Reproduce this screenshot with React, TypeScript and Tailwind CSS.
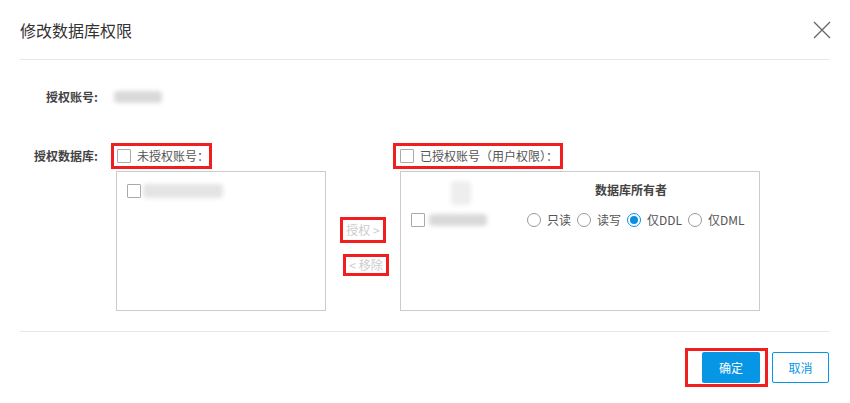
const font = { fontFamily: '"Noto Sans CJK SC", "Noto Sans", sans-serif' };

const Checkbox = () => (
  <span className="inline-block h-[14px] w-[14px] shrink-0 rounded-[1px] border border-[#aaa] bg-white" />
);

const Radio = ({ checked }: { checked?: boolean }) =>
  checked ? (
    <span className="flex h-[14px] w-[14px] shrink-0 items-center justify-center rounded-full border border-[#0a8fe0] bg-white">
      <span className="h-[8px] w-[8px] rounded-full bg-[#0a8fe0]" />
    </span>
  ) : (
    <span className="inline-block h-[14px] w-[14px] shrink-0 rounded-full border border-[#999] bg-white" />
  );

const Blur = ({ className }: { className: string }) => (
  <span className={`inline-block rounded-sm bg-[#d9d9d9] blur-[2px] ${className}`} />
);

const CloseIcon = () => (
  <svg width="18" height="18" viewBox="0 0 18 18" className="mr-[-1px]">
    <path d="M1 1L17 17M17 1L1 17" stroke="#666" strokeWidth="1.3" fill="none" />
  </svg>
);

const perms = ['只读', '读写', '仅DDL', '仅DML'];

const App = () => {
  return (
    <div className="h-[403px] w-[850px] bg-white text-[12px] text-[#333]" style={font}>
      {/* header */}
      <div className="mx-5 flex h-[60px] items-center justify-between border-b border-[#e8e8e8]">
        <h2 className="text-[16px] font-normal text-[#333]">修改数据库权限</h2>
        <CloseIcon />
      </div>

      {/* account */}
      <div className="mt-[27px] flex h-[20px] items-center">
        <div className="w-[100px] pr-[2px] text-right font-bold text-[#444]">授权账号:</div>
        <Blur className="ml-[14px] h-[12px] w-[48px]" />
      </div>

      {/* databases */}
      <div className="mt-[36px] flex">
        <div className="flex h-[26px] w-[100px] items-center justify-end pr-[2px] font-bold text-[#444]">
          授权数据库:
        </div>

        {/* unauthorized */}
        <div className="ml-[11px] flex flex-col">
          <div className="flex h-[26px] w-[101px] items-center gap-[6px] border-[3px] border-[#f01e1e] pl-[3px] text-[#555]">
            <Checkbox />
            <span>未授权账号：</span>
          </div>
          <div className="ml-[5px] mt-[2px] h-[140px] w-[210px] border border-[#ccc] pl-[10px] pt-[12px]">
            <div className="flex items-center">
              <Checkbox />
              <Blur className="ml-[2px] h-[14px] w-[80px] bg-[#e4e4e4]" />
            </div>
          </div>
        </div>

        {/* transfer buttons */}
        <div className="flex w-[67px] flex-col pt-[74px]">
          <div className="ml-[14px] flex h-[26px] w-[46px] items-center justify-center border-[3px] border-[#f01e1e] text-[#ccc]">
            授权 &gt;
          </div>
          <div className="ml-[17px] mt-[11px] flex h-[22px] w-[46px] items-center justify-center border-[3px] border-[#f01e1e] text-[#ccc]">
            &lt; 移除
          </div>
        </div>

        {/* authorized */}
        <div className="flex flex-col">
          <div className="flex h-[26px] w-[170px] items-center gap-[6px] border-[3px] border-[#f01e1e] pl-[4px] text-[#555]">
            <Checkbox />
            <span>已授权账号（用户权限）：</span>
          </div>
          <div className="ml-[7px] mt-[2px] h-[140px] w-[360px] border border-[#ccc]">
            <div className="flex h-[36px] items-center">
              <div className="flex w-[120px] justify-center pt-[6px]">
                <Blur className="h-[24px] w-[20px] bg-[#eee]" />
              </div>
              <div className="flex-1 pl-[74px] font-bold text-[#444]">数据库所有者</div>
            </div>
            <div className="flex h-[24px] items-center pl-[10px]">
              <Checkbox />
              <Blur className="ml-[4px] h-[12px] w-[58px]" />
              <div className="ml-[40px] flex items-center">
                {perms.map((p, i) => (
                  <div key={p} className="mr-[6px] flex items-center gap-[6px] text-[#555]">
                    <Radio checked={i === 2} />
                    <span>{p}</span>
                  </div>
                ))}
              </div>
            </div>
          </div>
        </div>
      </div>

      {/* footer */}
      <div className="mx-5 mt-[20px] border-t border-[#e8e8e8]" />
      <div className="mt-[16px] flex justify-end pr-[21px]">
        <div className="border-[3px] border-[#f01e1e] py-[1px] pl-[14px] pr-[5px]">
          <button className="h-[31px] w-[58px] rounded-[2px] bg-[#0796e5] text-[12px] text-white">确定</button>
        </div>
        <button className="ml-[4px] mt-[4px] h-[31px] w-[57px] rounded-[2px] border border-[#0796e5] bg-white text-[12px] text-[#0796e5]">
          取消
        </button>
      </div>
    </div>
  );
};

export default App;
